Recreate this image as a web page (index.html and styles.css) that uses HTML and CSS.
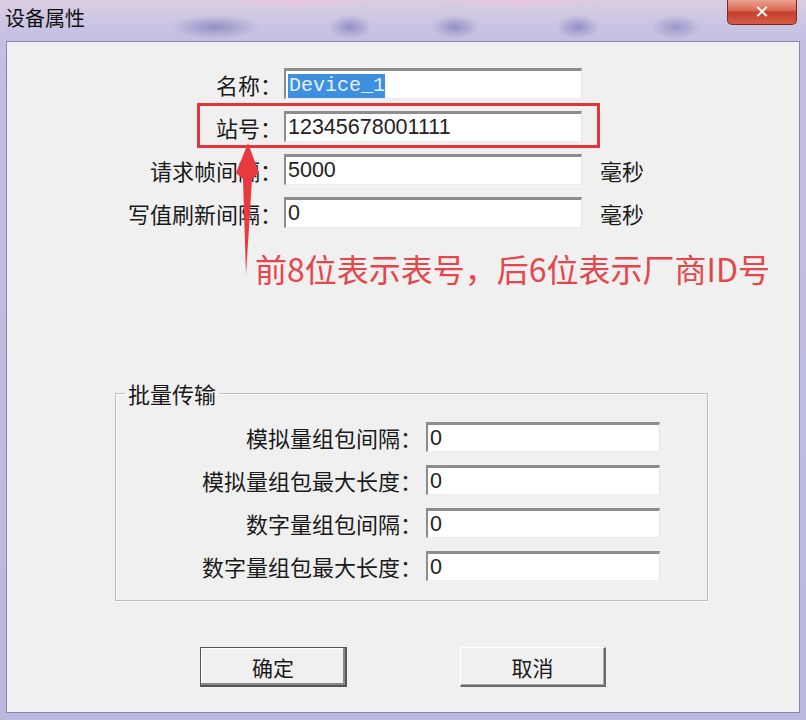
FILE: index.html
```html
<!DOCTYPE html>
<html lang="zh-CN">
<head>
    <meta charset="UTF-8">
    <meta name="viewport" content="width=device-width, initial-scale=1.0">
    <title>设备属性</title>
    <link rel="stylesheet" href="styles.css">
</head>
<body>

<div class="window">
    <div class="titlebar">
        <span class="title">设备属性</span>
        <span class="close-btn">✕</span>
    </div>

    <div class="panel">
        <div class="form">
            <span class="label">名称：</span>
            <div class="field"><span class="selected">Device_1</span></div>
            <span></span>

            <span class="label">站号：</span>
            <div class="field">12345678001111</div>
            <span></span>

            <span class="label">请求帧间隔：</span>
            <div class="field">5000</div>
            <span class="unit">毫秒</span>

            <span class="label">写值刷新间隔：</span>
            <div class="field">0</div>
            <span class="unit">毫秒</span>
        </div>

        <p class="note">前8位表示表号，后6位表示厂商ID号</p>

        <fieldset class="group">
            <legend>批量传输</legend>
            <div class="group-form">
                <span class="label">模拟量组包间隔：</span>
                <div class="field">0</div>
                <span class="label">模拟量组包最大长度：</span>
                <div class="field">0</div>
                <span class="label">数字量组包间隔：</span>
                <div class="field">0</div>
                <span class="label">数字量组包最大长度：</span>
                <div class="field">0</div>
            </div>
        </fieldset>

        <div class="actions">
            <button class="btn btn-default">确定</button>
            <button class="btn">取消</button>
        </div>

        <!-- annotation over the dialog -->
        <div class="mark-box"></div>
        <svg class="mark-arrow" width="30" height="140" viewBox="0 0 30 140">
            <polygon points="14,4 25,34 18,40 12,136 9,40 2,34" fill="#e8393e"/>
        </svg>
    </div>
</div>

</body>
</html>
```

FILE: styles.css
```css
body {
    margin: 0;
    font-family: "Noto Sans CJK SC", sans-serif;
}
.window {
    width: 806px;
    height: 720px;
    box-sizing: border-box;
    padding: 0 6px 7px 6px;
    display: flex;
    flex-direction: column;
    background: linear-gradient(to bottom, #d8cde3 0, #c4c0e3 40px, #bab8de 100%);
}
.titlebar {
    height: 41px;
    flex-shrink: 0;
    margin: 0 -6px;
    padding: 0 9px 0 5px;
    display: flex;
    justify-content: space-between;
    align-items: flex-start;
    background:
        radial-gradient(ellipse 45px 12px at 215px 27px, rgba(110, 108, 175, 0.6), transparent),
        radial-gradient(ellipse 22px 12px at 350px 27px, rgba(110, 108, 175, 0.6), transparent),
        radial-gradient(ellipse 24px 12px at 455px 27px, rgba(110, 108, 175, 0.6), transparent),
        radial-gradient(ellipse 22px 12px at 578px 27px, rgba(110, 108, 175, 0.6), transparent),
        radial-gradient(ellipse 26px 12px at 676px 27px, rgba(110, 108, 175, 0.5), transparent),
        radial-gradient(ellipse 90px 10px at 300px 0, rgba(236, 196, 226, 0.8), transparent),
        radial-gradient(ellipse 90px 10px at 520px 0, rgba(236, 196, 226, 0.8), transparent);
}
.title {
    font-size: 20px;
    line-height: 24px;
    margin-top: 6px;
    color: #111;
}
.close-btn {
    width: 70px;
    height: 25px;
    box-sizing: border-box;
    border: 1px solid #7d2b22;
    border-top: none;
    border-radius: 0 0 5px 5px;
    background: linear-gradient(to bottom, #eaa391 0%, #db6a53 42%, #c5402c 52%, #d65c45 100%);
    color: #fff;
    font-family: "DejaVu Sans", sans-serif;
    font-size: 18px;
    font-weight: bold;
    line-height: 23px;
    text-align: center;
}
.panel {
    flex: 1;
    position: relative;
    background: #f0f0f0;
    border: 1px solid #8a88a8;
}
.form {
    display: grid;
    grid-template-columns: 277px 298px auto;
    row-gap: 12px;
    align-items: center;
    padding-top: 26px;
}
.label {
    font-size: 22px;
    line-height: 24px;
    color: #1a1a1a;
    text-align: right;
    padding-right: 2px;
    white-space: nowrap;
}
.field {
    height: 31px;
    box-sizing: border-box;
    border-top: 3px solid #8d8d8d;
    border-left: 2px solid #8d8d8d;
    border-right: 1px solid #e4e4e4;
    border-bottom: 1px solid #ececec;
    background: #fff;
    padding-left: 2px;
    font-family: "Liberation Sans", sans-serif;
    font-size: 21.5px;
    line-height: 27px;
    color: #222;
}
.selected {
    display: inline-block;
    background: #3d8fe0;
    color: #e8f1fb;
    font-family: "Liberation Mono", monospace;
    font-size: 20px;
    line-height: 24px;
    padding: 0 0 0 1px;
}
.unit {
    margin-left: 18px;
    font-size: 22px;
    line-height: 24px;
    color: #1a1a1a;
}
.note {
    margin: 21px 0 0 248px;
    font-size: 32px;
    line-height: 38px;
    color: #e6454b;
}
.group {
    width: 593px;
    box-sizing: border-box;
    margin: 94px 0 0 108px;
    padding: 16px 0 19px 0;
    border: 1px solid #bdbdbd;
    box-shadow: 1px 1px 0 #fff, inset 1px 1px 0 #fff;
}
.group legend {
    margin-left: 9px;
    padding: 0 3px;
    font-size: 22px;
    line-height: 25px;
    color: #1a1a1a;
}
.group-form {
    display: grid;
    grid-template-columns: 310px 234px;
    row-gap: 13px;
    align-items: center;
}
.group-form .label {
    padding-right: 4px;
}
.group-form .field {
    height: 30px;
    line-height: 26px;
}
.actions {
    display: flex;
    gap: 113px;
    margin: 46px 0 0 193px;
}
.btn {
    width: 146px;
    height: 40px;
    box-sizing: border-box;
    background: #f0f0f0;
    font-family: "Noto Sans CJK SC", sans-serif;
    font-size: 21px;
    color: #1a1a1a;
    padding: 0;
    border-top: 1px solid #fff;
    border-left: 1px solid #fff;
    border-right: 2px solid #6a6a6a;
    border-bottom: 2px solid #6a6a6a;
    box-shadow: inset -1px -1px 0 #a8a8a8;
}
.btn-default {
    width: 147px;
    border: 1px solid #555;
    border-right-width: 2px;
    border-bottom-width: 2px;
    box-shadow: inset -2px -2px 0 #8a8a8a, inset 1px 1px 0 #fff;
}
.mark-box {
    position: absolute;
    left: 190px;
    top: 61px;
    width: 403px;
    height: 45px;
    box-sizing: border-box;
    border: 3px solid #e3343a;
}
.mark-arrow {
    position: absolute;
    left: 227px;
    top: 97px;
}
```
